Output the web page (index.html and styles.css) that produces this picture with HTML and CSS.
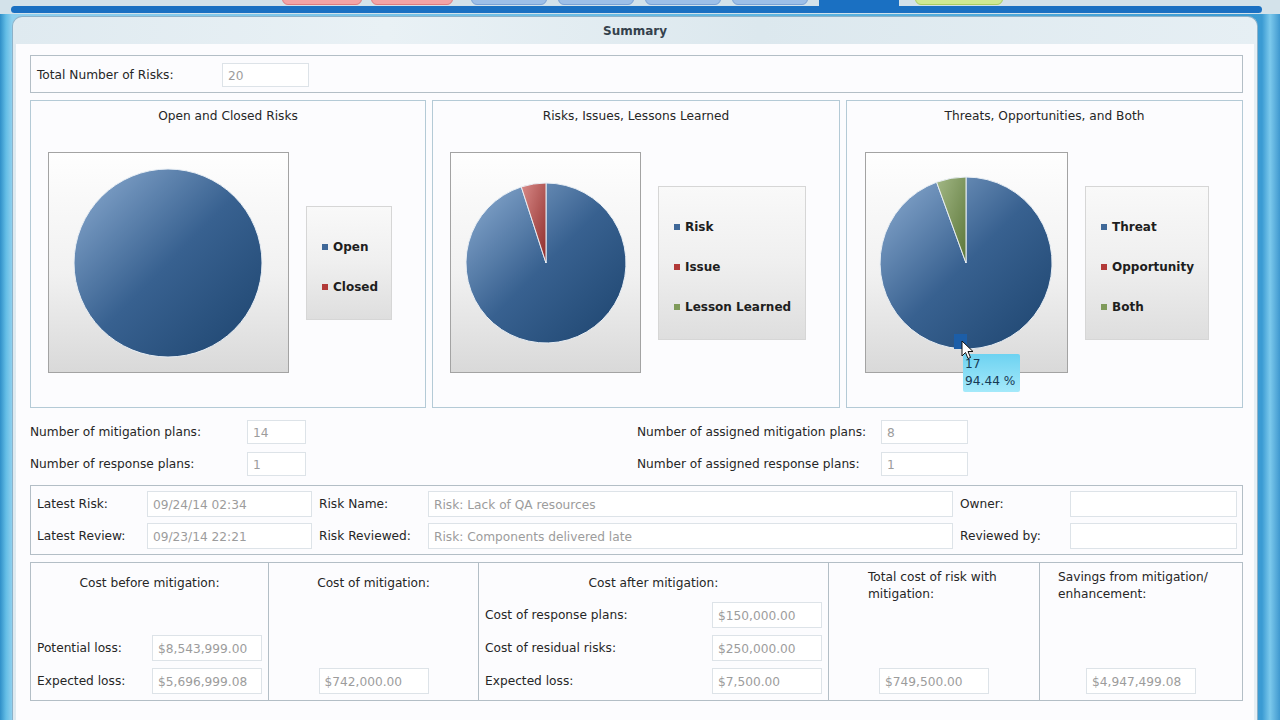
FILE: index.html
```html
<!DOCTYPE html>
<html lang="en">
<head>
    <meta charset="UTF-8">
    <title>Summary</title>
    <link rel="stylesheet" href="styles.css">
</head>
<body>

    <div class="tabs">
        <span class="tab pink"></span>
        <span class="tab pink"></span>
        <span class="tab blue gap"></span>
        <span class="tab blue"></span>
        <span class="tab blue"></span>
        <span class="tab blue"></span>
        <span class="tab active"></span>
        <span class="tab green"></span>
    </div>
    <div class="topbar"></div>

    <div class="panel">
        <div class="panel-title">Summary</div>
        <div class="panel-body">

            <div class="box total-row">
                <span class="total-label">Total Number of Risks:</span>
                <span class="field total-field">20</span>
            </div>

            <div class="charts">
                <!-- Open / closed -->
                <div class="chart-box">
                    <div class="chart-title">Open and Closed Risks</div>
                    <div class="chart-area">
                        <div class="plot plot-1">
                            <svg width="241" height="221" viewBox="0 0 241 221">
                                <defs>
                                    <linearGradient id="gBlue1" x1="0" y1="0" x2="1" y2="1">
                                        <stop offset="0" stop-color="#8eaed3"/>
                                        <stop offset="0.5" stop-color="#386190"/>
                                        <stop offset="1" stop-color="#1d446e"/>
                                    </linearGradient>
                                </defs>
                                <circle cx="120" cy="111" r="94" fill="url(#gBlue1)" stroke="#e8eef4" stroke-width="1"/>
                            </svg>
                        </div>
                        <div class="legend legend-1">
                            <div class="legend-item"><span class="mark m-blue"></span>Open</div>
                            <div class="legend-item"><span class="mark m-red"></span>Closed</div>
                        </div>
                    </div>
                </div>

                <!-- Risks / issues / lessons -->
                <div class="chart-box">
                    <div class="chart-title">Risks, Issues, Lessons Learned</div>
                    <div class="chart-area">
                        <div class="plot plot-2">
                            <svg width="191" height="221" viewBox="0 0 191 221">
                                <defs>
                                    <linearGradient id="gBlue2" x1="0" y1="0" x2="1" y2="1">
                                        <stop offset="0" stop-color="#8eaed3"/>
                                        <stop offset="0.5" stop-color="#386190"/>
                                        <stop offset="1" stop-color="#1d446e"/>
                                    </linearGradient>
                                    <linearGradient id="gRed" x1="0" y1="0" x2="1" y2="1">
                                        <stop offset="0" stop-color="#d98a88"/>
                                        <stop offset="1" stop-color="#8e2c2a"/>
                                    </linearGradient>
                                </defs>
                                <path d="M96,111 L96,31 A80,80 0 1,1 71.3,34.9 Z" fill="url(#gBlue2)" stroke="#e8eef4" stroke-width="1"/>
                                <path d="M96,111 L71.3,34.9 A80,80 0 0,1 96,31 Z" fill="url(#gRed)" stroke="#e8eef4" stroke-width="1"/>
                            </svg>
                        </div>
                        <div class="legend legend-2">
                            <div class="legend-item"><span class="mark m-blue"></span>Risk</div>
                            <div class="legend-item"><span class="mark m-red"></span>Issue</div>
                            <div class="legend-item"><span class="mark m-green"></span>Lesson Learned</div>
                        </div>
                    </div>
                </div>

                <!-- Threats / opportunities / both -->
                <div class="chart-box">
                    <div class="chart-title">Threats, Opportunities, and Both</div>
                    <div class="chart-area">
                        <div class="plot plot-3">
                            <svg width="203" height="221" viewBox="0 0 203 221">
                                <defs>
                                    <linearGradient id="gBlue3" x1="0" y1="0" x2="1" y2="1">
                                        <stop offset="0" stop-color="#8eaed3"/>
                                        <stop offset="0.5" stop-color="#386190"/>
                                        <stop offset="1" stop-color="#1d446e"/>
                                    </linearGradient>
                                    <linearGradient id="gGreen" x1="0" y1="0" x2="1" y2="1">
                                        <stop offset="0" stop-color="#a3b886"/>
                                        <stop offset="1" stop-color="#5b7638"/>
                                    </linearGradient>
                                </defs>
                                <path d="M101,111 L101,25 A86,86 0 1,1 71.6,30.2 Z" fill="url(#gBlue3)" stroke="#e8eef4" stroke-width="1"/>
                                <path d="M101,111 L71.6,30.2 A86,86 0 0,1 101,25 Z" fill="url(#gGreen)" stroke="#e8eef4" stroke-width="1"/>
                            </svg>
                        </div>
                        <div class="legend legend-3">
                            <div class="legend-item"><span class="mark m-blue"></span>Threat</div>
                            <div class="legend-item"><span class="mark m-red"></span>Opportunity</div>
                            <div class="legend-item"><span class="mark m-green"></span>Both</div>
                        </div>
                    </div>
                    <span class="hover-mark"></span>
                    <div class="tooltip">17<br>94.44 %</div>
                    <svg class="cursor" width="13" height="20" viewBox="0 0 13 20">
                        <path d="M1,1 L1,16 L4.5,12.5 L7,18.5 L9.5,17.5 L7,11.5 L12,11.5 Z" fill="#fff" stroke="#111" stroke-width="1"/>
                    </svg>
                </div>
            </div>

            <div class="plans">
                <div class="plan-row">
                    <span class="plan-label">Number of mitigation plans:</span>
                    <span class="field plan-field">14</span>
                </div>
                <div class="plan-row right">
                    <span class="plan-label">Number of assigned mitigation plans:</span>
                    <span class="field plan-field wide">8</span>
                </div>
                <div class="plan-row">
                    <span class="plan-label">Number of response plans:</span>
                    <span class="field plan-field">1</span>
                </div>
                <div class="plan-row right">
                    <span class="plan-label">Number of assigned response plans:</span>
                    <span class="field plan-field wide">1</span>
                </div>
            </div>

            <div class="box latest">
                <span class="lbl">Latest Risk:</span>
                <span class="field">09/24/14 02:34</span>
                <span class="lbl inner">Risk Name:</span>
                <span class="field">Risk: Lack of QA resources</span>
                <span class="lbl inner">Owner:</span>
                <span class="field"></span>

                <span class="lbl">Latest Review:</span>
                <span class="field">09/23/14 22:21</span>
                <span class="lbl inner">Risk Reviewed:</span>
                <span class="field">Risk: Components delivered late</span>
                <span class="lbl inner">Reviewed by:</span>
                <span class="field"></span>
            </div>

            <div class="box costs">
                <div class="cost-col c1">
                    <div class="cost-title">Cost before mitigation:</div>
                    <div class="cost-rows">
                        <div class="cost-row"><span>Potential loss:</span><span class="field money">$8,543,999.00</span></div>
                        <div class="cost-row"><span>Expected loss:</span><span class="field money">$5,696,999.08</span></div>
                    </div>
                </div>
                <div class="cost-col c2">
                    <div class="cost-title">Cost of mitigation:</div>
                    <div class="cost-rows center">
                        <span class="field money">$742,000.00</span>
                    </div>
                </div>
                <div class="cost-col c3">
                    <div class="cost-title">Cost after mitigation:</div>
                    <div class="cost-rows">
                        <div class="cost-row"><span>Cost of response plans:</span><span class="field money">$150,000.00</span></div>
                        <div class="cost-row"><span>Cost of residual risks:</span><span class="field money">$250,000.00</span></div>
                        <div class="cost-row"><span>Expected loss:</span><span class="field money">$7,500.00</span></div>
                    </div>
                </div>
                <div class="cost-col c4">
                    <div class="cost-title two">Total cost of risk with<br>mitigation:</div>
                    <div class="cost-rows center">
                        <span class="field money">$749,500.00</span>
                    </div>
                </div>
                <div class="cost-col c5">
                    <div class="cost-title two">Savings from mitigation/<br>enhancement:</div>
                    <div class="cost-rows center">
                        <span class="field money">$4,947,499.08</span>
                    </div>
                </div>
            </div>

        </div>
    </div>

</body>
</html>
```

FILE: styles.css
```css
html, body {
    height: 100%;
    overflow: hidden;
}

body {
    margin: 0;
    font-family: "DejaVu Sans", Verdana, sans-serif;
    font-size: 12.2px;
    color: #262626;
    background:
        linear-gradient(to bottom, #d3e2ea 0, #d3e2ea 14px, transparent 14px),
        linear-gradient(to right, #2f8fc8 0, #63bde6 6px, #8fd0ee 12px, #5fb6e0 60%, #3b9bd3 1262px, #7cc9ec 1270px, #3f98cf 1280px);
}

/* tab strip at the very top, only its bottom edge is visible */
.tabs {
    display: flex;
    height: 6px;
    padding-left: 282px;
    overflow: hidden;
}

.tab {
    display: block;
    height: 10px;
    margin-top: -5px;
    margin-right: 9px;
    border-radius: 0 0 6px 6px;
    box-sizing: border-box;
}

.tab.pink {
    width: 80px;
    background-color: #f3a4a6;
    border: 1px solid #de7c80;
}

.tab.pink + .tab.pink {
    width: 82px;
}

.tab.blue {
    width: 76px;
    margin-right: 11px;
    background-color: #9dbfe8;
    border: 1px solid #7aa2d6;
}

.tab.gap {
    margin-left: 9px;
}

.tab.active {
    width: 80px;
    height: 12px;
    margin-right: 16px;
    border-radius: 0;
    background-color: #1a70c2;
}

.tab.green {
    width: 88px;
    background-color: #cfe993;
    border: 1px solid #a9cd63;
}

.topbar {
    height: 7px;
    margin: 0 18px 0 11px;
    background-color: #1a70c2;
    border-radius: 4px;
}

.panel {
    margin: 3px 22px 0 12px;
    height: calc(100vh - 16px);
    box-sizing: border-box;
    padding: 0 3px;
    border: 1px solid #8db2c9;
    border-bottom: none;
    border-radius: 10px 10px 0 0;
    background: linear-gradient(to right, #dfeaf0, #e9f1f5 30%, #dce8ee 60%, #e6eff4);
    overflow: hidden;
}

.panel-title {
    height: 27px;
    line-height: 28px;
    text-align: center;
    font-weight: bold;
    font-size: 12px;
    color: #34414c;
}

.panel-body {
    height: 100%;
    padding: 11px 11px 0 14px;
    background-color: #fcfcfe;
}

.box {
    border: 1px solid #b3bec6;
    box-sizing: border-box;
}

.field {
    display: block;
    box-sizing: border-box;
    height: 24px;
    line-height: 24px;
    padding-left: 5px;
    border: 1px solid #dde3e8;
    background-color: #fff;
    color: #9c9c9c;
    white-space: nowrap;
    overflow: hidden;
}

/* total */
.total-row {
    display: flex;
    align-items: center;
    height: 38px;
    padding: 1px 0 0 6px;
}

.total-label {
    width: 185px;
}

.total-field {
    width: 87px;
}

/* charts */
.charts {
    display: grid;
    grid-template-columns: 396px 408px 1fr;
    column-gap: 6px;
    margin-top: 7px;
}

.chart-box {
    position: relative;
    height: 308px;
    border: 1px solid #b4cad6;
    box-sizing: border-box;
}

.chart-title {
    text-align: center;
    margin-top: 8px;
    height: 15px;
    line-height: 15px;
}

.chart-area {
    display: flex;
    align-items: center;
    gap: 17px;
    margin-top: 28px;
    padding-left: 17px;
}

.charts .chart-box:last-child .chart-area {
    padding-left: 18px;
}

.plot {
    height: 221px;
    box-sizing: border-box;
    border: 1px solid #a3a3a3;
    background: linear-gradient(to bottom, #fefefe, #f1f1f1 55%, #d9d9d9);
}

.plot svg {
    display: block;
    margin: -1px;
}

.plot-1 { width: 241px; }
.plot-2 { width: 191px; }
.plot-3 { width: 203px; }

.legend {
    box-sizing: border-box;
    border: 1px solid #d6d6d6;
    background: linear-gradient(to bottom, #f9f9f9, #efefef 50%, #dedede);
    padding: 8px 0 0 15px;
    display: flex;
    flex-direction: column;
    justify-content: center;
    gap: 26px;
}

.legend-1 { width: 86px; height: 114px; }
.legend-2 { width: 148px; height: 154px; }
.legend-3 { width: 124px; height: 154px; }

.legend-item {
    display: flex;
    align-items: center;
    height: 14px;
    font-weight: bold;
    font-size: 12px;
    color: #1e1e1e;
}

.mark {
    width: 6px;
    height: 6px;
    margin-right: 5px;
}

.m-blue { background-color: #3f6898; }
.m-red { background-color: #b23a38; }
.m-green { background-color: #7f9a5a; }

.hover-mark {
    position: absolute;
    left: 107px;
    top: 233px;
    width: 13px;
    height: 15px;
    background-color: #1c5ea8;
}

.tooltip {
    position: absolute;
    left: 116px;
    top: 253px;
    width: 57px;
    height: 38px;
    box-sizing: border-box;
    padding: 2px 0 0 2px;
    line-height: 17px;
    color: #173a55;
    border-radius: 2px;
    background: linear-gradient(to bottom, #6dd2f1, #a4e9fa);
}

.cursor {
    position: absolute;
    left: 114px;
    top: 239px;
}

/* plans */
.plans {
    display: grid;
    grid-template-columns: 607px 1fr;
    row-gap: 8px;
    margin-top: 12px;
}

.plan-row {
    display: flex;
    align-items: center;
}

.plan-row .plan-label {
    width: 217px;
}

.plan-row.right .plan-label {
    width: 244px;
}

.plan-field {
    width: 59px;
}

.plan-field.wide {
    width: 87px;
}

/* latest risk / review */
.latest {
    display: grid;
    grid-template-columns: 110px 165px 116px 525px 117px 167px;
    row-gap: 6px;
    align-items: center;
    margin-top: 9px;
    padding: 5px 6px 5px 6px;
}

.latest .field {
    height: 26px;
    line-height: 26px;
}

.latest .lbl {
    white-space: nowrap;
}

.latest .lbl.inner {
    padding-left: 7px;
}

/* costs */
.costs {
    display: grid;
    grid-template-columns: 237px 210px 350px 211px 1fr;
    height: 139px;
    margin-top: 7px;
}

.cost-col {
    display: flex;
    flex-direction: column;
    padding: 13px 6px 6px 6px;
    border-left: 1px solid #b3bec6;
}

.cost-col.c1 {
    border-left: none;
}

.cost-title {
    text-align: center;
    line-height: 15px;
}

.cost-title.two {
    text-align: left;
    line-height: 17px;
    margin-top: -7px;
}

.c4 .cost-title { padding-left: 33px; }
.c5 .cost-title { padding-left: 12px; }

.cost-rows {
    margin-top: auto;
    display: flex;
    flex-direction: column;
    gap: 7px;
}

.cost-rows.center {
    align-items: center;
}

.cost-row {
    display: flex;
    align-items: center;
    justify-content: space-between;
}

.money {
    width: 110px;
    height: 26px;
    line-height: 26px;
}
```
